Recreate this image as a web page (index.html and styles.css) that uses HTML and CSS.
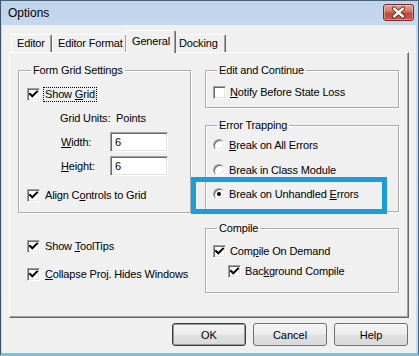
FILE: index.html
```html
<!DOCTYPE html>
<html>
<head>
<meta charset="utf-8">
<link rel="stylesheet" href="styles.css">
</head>
<body>
<div class="window">
  <div class="titlebar">
    <span class="title">Options</span>
    <button class="close" aria-label="Close">
      <svg width="31" height="17" viewBox="0 0 31 17">
        <path d="M11 4.5 L20 12.5 M20 4.5 L11 12.5" stroke="#5a1f1a" stroke-width="4.2" stroke-linecap="round"/>
        <path d="M11 4.5 L20 12.5 M20 4.5 L11 12.5" stroke="#ffffff" stroke-width="2.4" stroke-linecap="round"/>
      </svg>
    </button>
  </div>
  <div class="client">
    <div class="tabs">
      <div class="tab tab-editor">Editor</div>
      <div class="tab tab-format">Editor Format</div>
      <div class="tab tab-general active">General</div>
      <div class="tab tab-docking">Docking</div>
    </div>
    <div class="panel">
      <div class="col">
        <fieldset class="group group-grid">
          <legend>Form Grid Settings</legend>
          <div class="opt opt-showgrid"><span class="cb"><svg viewBox="0 0 11 11"><path d="M2 5 L4.3 7.3 L9 2.6" /></svg></span><span class="focus">Show <u>G</u>rid</span></div>
          <div class="units">Grid Units:&nbsp; Points</div>
          <div class="field field-width"><span class="flabel"><u>W</u>idth:</span><span class="input">6</span></div>
          <div class="field field-height"><span class="flabel"><u>H</u>eight:</span><span class="input">6</span></div>
          <div class="opt opt-align"><span class="cb"><svg viewBox="0 0 11 11"><path d="M2 5 L4.3 7.3 L9 2.6" /></svg></span><span>Align C<u>o</u>ntrols to Grid</span></div>
        </fieldset>
        <div class="opt opt-tooltips"><span class="cb"><svg viewBox="0 0 11 11"><path d="M2 5 L4.3 7.3 L9 2.6" /></svg></span><span>Show <u>T</u>oolTips</span></div>
        <div class="opt opt-collapse"><span class="cb"><svg viewBox="0 0 11 11"><path d="M2 5 L4.3 7.3 L9 2.6" /></svg></span><span><u>C</u>ollapse Proj. Hides Windows</span></div>
      </div>
      <div class="col">
        <fieldset class="group group-edit">
          <legend>Edit and Continue</legend>
          <div class="opt opt-notify"><span class="cb empty"></span><span><u>N</u>otify Before State Loss</span></div>
        </fieldset>
        <fieldset class="group group-error">
          <legend>Error Trapping</legend>
          <div class="opt opt-r1"><span class="radio"></span><span><u>B</u>reak on All Errors</span></div>
          <div class="opt opt-r2"><span class="radio"></span><span>Break in Class Module</span></div>
          <div class="opt opt-r3"><span class="radio on"></span><span>Break on Unhandled <u>E</u>rrors</span></div>
        </fieldset>
        <fieldset class="group group-compile">
          <legend>Compile</legend>
          <div class="opt opt-demand"><span class="cb"><svg viewBox="0 0 11 11"><path d="M2 5 L4.3 7.3 L9 2.6" /></svg></span><span>Com<u>p</u>ile On Demand</span></div>
          <div class="opt opt-background"><span class="cb"><svg viewBox="0 0 11 11"><path d="M2 5 L4.3 7.3 L9 2.6" /></svg></span><span>Bac<u>k</u>ground Compile</span></div>
        </fieldset>
      </div>
    </div>
    <div class="buttons">
      <button class="btn btn-default">OK</button>
      <button class="btn">Cancel</button>
      <button class="btn">Help</button>
    </div>
  </div>
  <div class="highlight"></div>
</div>
</body>
</html>
```
FILE: styles.css
```css
html, body {
  margin: 0;
  padding: 0;
  background: #ffffff;
}

body {
  font-family: "Liberation Sans", Arial, sans-serif;
  font-size: 11px;
  color: #000;
  letter-spacing: -0.15px;
}

.window {
  position: relative;
  width: 419px;
  height: 356px;
  box-sizing: border-box;
  border-top: 1px solid #4a6078;
  border-left: 1px solid #3d5168;
  border-right: 1px solid #4a6078;
  border-bottom: 3px solid #6ec7e5;
  background: linear-gradient(#bfd3ea, #cddef0 60px, #c9dbee);
  display: flex;
  flex-direction: column;
}

.titlebar {
  height: 24px;
  display: flex;
  align-items: flex-start;
  padding-left: 7px;
}

.title {
  font-size: 12px;
  letter-spacing: 0;
  line-height: 24px;
  color: #000;
}

.close {
  margin: 3px 4px 0 auto;
  width: 31px;
  height: 17px;
  padding: 0;
  border: 1px solid #6f2b24;
  border-radius: 3px;
  background: linear-gradient(#e4a79c 0%, #d47a6c 40%, #c24a3a 55%, #c55643 100%);
  box-shadow: inset 0 0 0 1px rgba(255, 220, 210, 0.45);
  display: flex;
  align-items: center;
  justify-content: center;
  box-sizing: border-box;
}

.close svg {
  display: block;
  margin: -1px;
}

.client {
  flex: 1;
  background: #f0f0f0;
  margin: 0 2px 0 1px;
  padding: 5px 7px 0 7px;
  box-sizing: border-box;
}

/* Tabs */
.tabs {
  display: flex;
  align-items: flex-end;
  height: 22px;
  padding-left: 2px;
}

.tab {
  height: 18px;
  box-sizing: border-box;
  padding: 0 5px;
  line-height: 17px;
  border: 1px solid #ffffff;
  border-right-color: #696969;
  border-bottom: none;
  border-radius: 2px 2px 0 0;
  box-shadow: inset -1px 0 0 #a0a0a0;
  background: #f0f0f0;
  white-space: nowrap;
}

.tab-editor { width: 41px; }
.tab-format { width: 75px; }
.tab-general { width: 50px; }
.tab-docking { width: 52px; padding-left: 4px; }

.tab.active {
  height: 23px;
  margin: 0 -2px -1px -1px;
  line-height: 20px;
  padding-bottom: 2px;
  position: relative;
  z-index: 1;
}

/* Panel */
.panel {
  height: 266px;
  box-sizing: border-box;
  border-top: 1px solid #ffffff;
  border-left: 1px solid #ffffff;
  border-right: 1px solid #696969;
  border-bottom: 1px solid #696969;
  box-shadow: inset -1px -1px 0 #a0a0a0;
  display: grid;
  grid-template-columns: 173px 194px;
  column-gap: 14px;
  padding: 11px 9px 0 8px;
  align-items: start;
}

.col {
  display: flex;
  flex-direction: column;
}

/* Group boxes */
.group {
  margin: 0;
  padding: 0 0 10px 8px;
  border: 1px solid #acacac;
  box-shadow: inset 1px 1px 0 #ffffff, 1px 1px 0 #ffffff;
  min-width: 0;
}

.group legend {
  margin-left: 4px;
  padding: 0 2px;
  line-height: 13px;
}

.group-edit { padding: 0 0 8px 7px; }
.group-error { padding: 0 0 10px 7px; margin-top: 11px; }
.group-compile { padding: 0 0 14px 7px; margin-top: 10px; }

/* Option rows */
.opt {
  display: flex;
  align-items: center;
  height: 14px;
  gap: 5px;
  white-space: nowrap;
}

.group-edit .opt,
.group-error .opt,
.group-compile .opt {
  gap: 4px;
}

.opt-showgrid { margin-top: 10px; }
.opt-align { margin-top: 12px; }
.opt-tooltips { margin-top: 26px; margin-left: 9px; }
.opt-collapse { margin-top: 14px; margin-left: 9px; }
.opt-notify { margin-top: 8px; }
.opt-r1 { margin-top: 6px; }
.opt-r2 { margin-top: 11px; }
.opt-r3 { margin-top: 10px; }
.opt-demand { margin-top: 9px; }
.opt-background { margin-top: 6px; margin-left: 15px; }

.focus {
  outline: 1px dotted #000;
  outline-offset: 0;
  padding: 0 1px;
  margin-left: -1px;
  line-height: 13px;
}

.units {
  margin-top: 11px;
  margin-left: 33px;
  line-height: 13px;
}

.field {
  display: flex;
  align-items: center;
  margin-left: 34px;
  height: 20px;
}

.field-width { margin-top: 7px; }
.field-height { margin-top: 4px; }

.flabel {
  width: 49px;
}

.input {
  width: 58px;
  height: 20px;
  box-sizing: border-box;
  background: #ffffff;
  border: 1px solid;
  border-color: #a0a0a0 #ffffff #ffffff #a0a0a0;
  box-shadow: inset 1px 1px 0 #696969, inset -1px -1px 0 #e3e3e3;
  padding-left: 4px;
  line-height: 18px;
}

/* Checkbox */
.cb {
  width: 13px;
  height: 13px;
  box-sizing: border-box;
  flex: none;
  background: #ffffff;
  border: 1px solid;
  border-color: #a0a0a0 #ffffff #ffffff #a0a0a0;
  box-shadow: inset 1px 1px 0 #696969, inset -1px -1px 0 #e3e3e3;
  display: flex;
  align-items: center;
  justify-content: center;
}

.cb svg {
  width: 11px;
  height: 11px;
  display: block;
}

.cb svg path {
  fill: none;
  stroke: #000;
  stroke-width: 2;
  stroke-linecap: square;
}

/* Radio */
.radio {
  width: 12px;
  height: 12px;
  box-sizing: border-box;
  flex: none;
  border-radius: 50%;
  background: #ffffff;
  border: 1px solid;
  border-color: #a0a0a0 #ffffff #ffffff #a0a0a0;
  box-shadow: inset 1px 1px 0 #696969, inset -1px -1px 0 #e3e3e3;
  display: flex;
  align-items: center;
  justify-content: center;
}

.radio.on::after {
  content: "";
  width: 4px;
  height: 4px;
  border-radius: 50%;
  background: #000;
}

/* Buttons */
.buttons {
  display: flex;
  justify-content: flex-end;
  gap: 7px;
  margin-top: 5px;
  padding-right: 1px;
}

.btn {
  width: 74px;
  height: 23px;
  box-sizing: border-box;
  border: 1px solid #707070;
  border-radius: 3px;
  background: linear-gradient(#f4f4f4 0%, #ededed 48%, #e0e0e0 52%, #d9d9d9 100%);
  font-family: "Liberation Sans", Arial, sans-serif;
  font-size: 11px;
  color: #000;
  padding: 0;
}

.btn-default {
  border-color: #3c3c3c;
  box-shadow: inset 0 0 0 1px #9a9a9a;
}

/* Annotation overlay */
.highlight {
  position: absolute;
  left: 190px;
  top: 176px;
  width: 196px;
  height: 37px;
  box-sizing: border-box;
  border: 5px solid #1a9ddb;
}
```
